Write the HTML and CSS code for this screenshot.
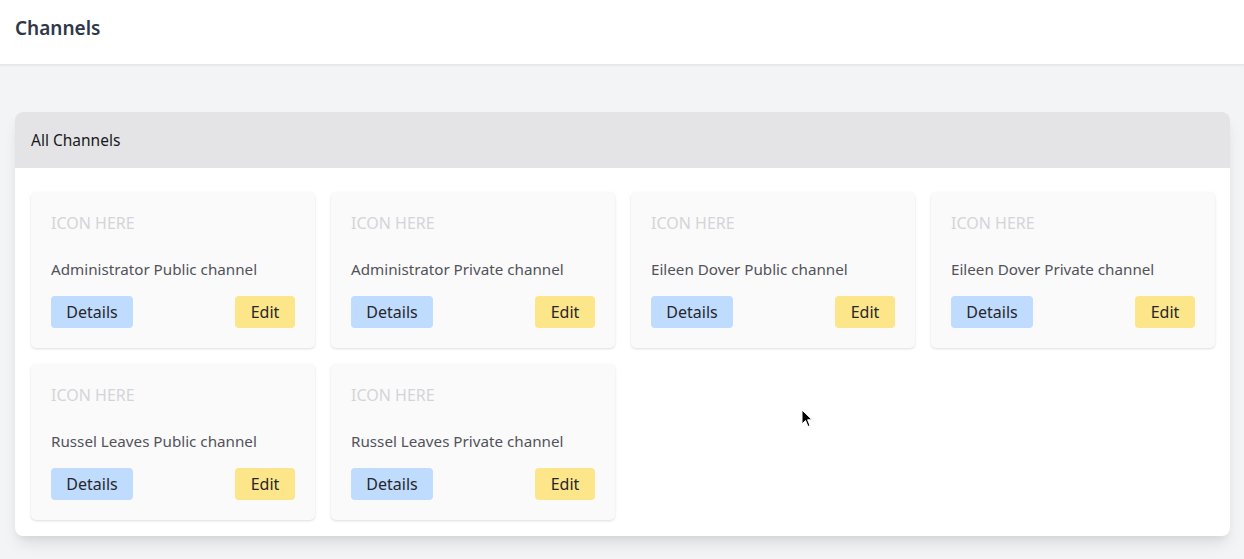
FILE: index.html
```html
<!DOCTYPE html>
<html lang="en">
<head>
<meta charset="utf-8">
<title>Channels</title>
<link rel="stylesheet" href="styles.css">
</head>
<body>
<header class="topbar">
  <h1 class="page-title">Channels</h1>
</header>
<main class="content">
  <section class="panel">
    <div class="panel-head">All Channels</div>
    <div class="panel-body">
      <div class="card">
        <div class="card-icon">ICON HERE</div>
        <div class="card-name">Administrator Public channel</div>
        <div class="card-actions"><button class="btn btn-details">Details</button><button class="btn btn-edit">Edit</button></div>
      </div>
      <div class="card">
        <div class="card-icon">ICON HERE</div>
        <div class="card-name">Administrator Private channel</div>
        <div class="card-actions"><button class="btn btn-details">Details</button><button class="btn btn-edit">Edit</button></div>
      </div>
      <div class="card">
        <div class="card-icon">ICON HERE</div>
        <div class="card-name">Eileen Dover Public channel</div>
        <div class="card-actions"><button class="btn btn-details">Details</button><button class="btn btn-edit">Edit</button></div>
      </div>
      <div class="card">
        <div class="card-icon">ICON HERE</div>
        <div class="card-name">Eileen Dover Private channel</div>
        <div class="card-actions"><button class="btn btn-details">Details</button><button class="btn btn-edit">Edit</button></div>
      </div>
      <div class="card">
        <div class="card-icon">ICON HERE</div>
        <div class="card-name">Russel Leaves Public channel</div>
        <div class="card-actions"><button class="btn btn-details">Details</button><button class="btn btn-edit">Edit</button></div>
      </div>
      <div class="card">
        <div class="card-icon">ICON HERE</div>
        <div class="card-name">Russel Leaves Private channel</div>
        <div class="card-actions"><button class="btn btn-details">Details</button><button class="btn btn-edit">Edit</button></div>
      </div>
    </div>
  </section>
</main>
<svg class="cursor" width="12" height="19" viewBox="0 0 12 19"><path d="M1 1 L1 15 L4.5 11.5 L7 17.5 L9 16.6 L6.6 10.8 L11 10.8 Z" fill="#000" stroke="#fff" stroke-width="1"/></svg>
</body>
</html>
```
FILE: styles.css
```css
* { box-sizing: border-box; }
html, body { margin: 0; padding: 0; }
body {
  background: #f3f4f6;
  font-family: "Noto Sans", "Open Sans", sans-serif;
  color: #1f2937;
  height: 559px;
  overflow: hidden;
  position: relative;
}
.topbar {
  background: #fff;
  height: 65px;
  border-bottom: 1px solid #e5e7eb;
  box-shadow: 0 1px 2px rgba(0,0,0,0.05);
  display: flex;
  align-items: center;
  padding: 0 15px 9px;
}
.page-title {
  margin: 0;
  font-size: 19px;
  font-weight: 600;
  color: #2d3748;
}
.content { padding: 47px 14px 0 15px; }
.panel {
  background: #fff;
  border-radius: 8px;
  box-shadow: 0 10px 15px -3px rgba(0,0,0,0.1), 0 4px 6px -2px rgba(0,0,0,0.05);
  overflow: hidden;
}
.panel-head {
  background: #e4e4e7;
  height: 56px;
  display: flex;
  align-items: center;
  padding: 0 16px;
  font-size: 15.5px;
  font-weight: 400;
  color: #18181b;
}
.panel-body {
  display: grid;
  grid-template-columns: repeat(4, 1fr);
  gap: 16px;
  padding: 24px 15px 16px 16px;
}
.card {
  background: #fafafa;
  border-radius: 5px;
  box-shadow: 0 1px 3px rgba(0,0,0,0.1), 0 1px 2px rgba(0,0,0,0.04);
  padding: 20px;
  height: 156px;
}
.card-icon {
  font-size: 16px;
  line-height: 22px;
  color: #d4d4d8;
  margin-bottom: 23px;
}
.card-name {
  font-size: 15.2px;
  line-height: 24px;
  color: #52525b;
  margin-bottom: 15px;
}
.card-actions {
  display: flex;
  justify-content: space-between;
}
.btn {
  border: 0;
  border-radius: 4px;
  height: 32px;
  padding: 0 0 1px;
  font-family: inherit;
  font-size: 16px;
  color: #27272a;
}
.btn-details { background: #bfdbfe; width: 82px; }
.btn-edit { background: #fde68a; width: 60px; }
.cursor { position: absolute; left: 801px; top: 409px; }
```
